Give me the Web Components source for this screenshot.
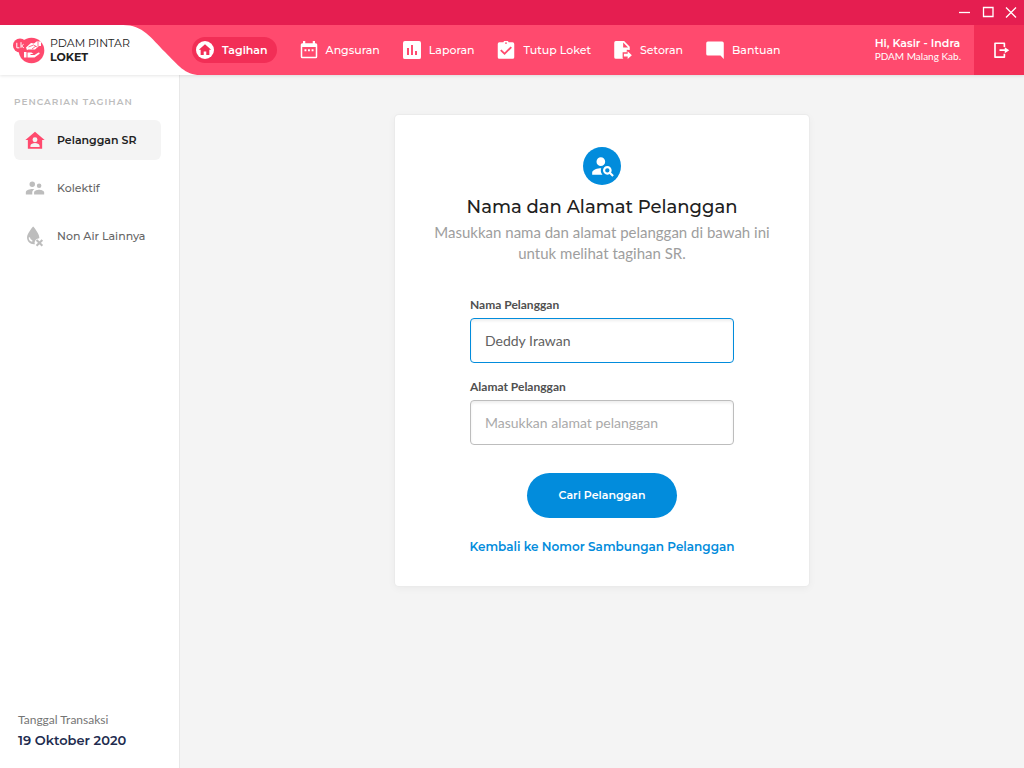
<!DOCTYPE html>
<html lang="id">
<head>
<meta charset="utf-8">
<meta name="viewport" content="width=device-width, initial-scale=1">
<title>PDAM Pintar Loket</title>
<style>
html, body { margin: 0; height: 100%; }
body {
  --display: Montserrat, Inter, sans-serif;
  --body: Lato, "Noto Sans", sans-serif;
  --pink: #ff4a6e;
  --rose: #f22e56;
  --blue: #028cdc;
  font-family: var(--display);
  background: #f4f4f4;
  color: #212121;
}
</style>
</head>
<body>
<app-shell>
  <title-bar slot="top"></title-bar>
  <top-bar slot="top">
    <brand-mark slot="brand"></brand-mark>
    <nav-item icon="home" active>Tagihan</nav-item>
    <nav-item icon="calendar">Angsuran</nav-item>
    <nav-item icon="chart">Laporan</nav-item>
    <nav-item icon="clipboard">Tutup Loket</nav-item>
    <nav-item icon="file">Setoran</nav-item>
    <nav-item icon="chat">Bantuan</nav-item>
    <user-info slot="user"><span slot="name">Hi, Kasir - Indra</span>PDAM Malang Kab.</user-info>
  </top-bar>
  <side-menu slot="side" heading="PENCARIAN TAGIHAN">
    <side-item icon="house" active>Pelanggan SR</side-item>
    <side-item icon="people">Kolektif</side-item>
    <side-item icon="drop">Non Air Lainnya</side-item>
    <span slot="date-label">Tanggal Transaksi</span>
    <span slot="date">19 Oktober 2020</span>
  </side-menu>
  <search-card>
    <span slot="title">Nama dan Alamat Pelanggan</span>
    <span slot="lead">Masukkan nama dan alamat pelanggan di bawah ini untuk melihat tagihan SR.</span>
    <text-field slot="fields" label="Nama Pelanggan" value="Deddy Irawan" active></text-field>
    <text-field slot="fields" label="Alamat Pelanggan" placeholder="Masukkan alamat pelanggan"></text-field>
  </search-card>
</app-shell>
<script>
const icons = {
  home: '<circle cx="12" cy="12" r="12" fill="#fff"/><path fill="#f22e56" d="M12 4.200 3.800 11.800h2.400v6.700h4.100v-4.600h3.400v4.600h4.100v-6.700h2.400z"/>',
  calendar: '<path fill="currentColor" fill-rule="evenodd" d="M4 0h3v3h10V0h3v3h1a2 2 0 0 1 2 2v16a2 2 0 0 1-2 2H3a2 2 0 0 1-2-2V5a2 2 0 0 1 2-2h1zM3 8v13h18V8zM6 11h2.500v2.500H6zm4.700 0h2.500v2.500h-2.500zm4.800 0H18v2.500h-2.500z"/>',
  chart: '<path fill="currentColor" fill-rule="evenodd" d="M2.500 0h19A2.500 2.500 0 0 1 24 2.500v19a2.500 2.500 0 0 1-2.500 2.500h-19A2.500 2.500 0 0 1 0 21.500v-19A2.500 2.500 0 0 1 2.500 0zM5.300 9.300v9.400H8V9.300zm5.400-4v13.400h2.600V5.300zm5.300 8v5.400h2.700v-5.400z"/>',
  clipboard: '<path fill="currentColor" fill-rule="evenodd" d="M3.200 1.800h5.300a3.700 3.700 0 0 1 7 0h5.300A2.200 2.200 0 0 1 23 4v17.500a2.200 2.200 0 0 1-2.200 2.200H3.200A2.200 2.200 0 0 1 1 21.500V4a2.200 2.200 0 0 1 2.200-2.200zM12 1.600a1.200 1.200 0 1 0 0 2.400 1.200 1.200 0 0 0 0-2.400zM18.200 7.200l-8.100 8.200-4.200-4.200-1.700 1.700 5.900 5.900 9.800-9.900z"/>',
  file: '<path fill="currentColor" fill-rule="evenodd" d="M2.500 0h11L21 7.500v4.500l-4-.2v3.300h-5.500v7.700l1 1H2.500A2.200 2.200 0 0 1 .3 21.600V2.200A2.200 2.200 0 0 1 2.500 0zM12.200 2.100v6.500h6.600z"/><path fill="currentColor" d="M13.200 17h5v-3.400l5.600 5.300-5.600 5.100v-3.400h-5z"/>',
  chat: '<path fill="currentColor" d="M2.500.7h19a2.200 2.200 0 0 1 2.200 2.200V24l-4.400-4.600H2.500a2.200 2.200 0 0 1-2.200-2.200V2.900A2.200 2.200 0 0 1 2.500.7z"/>',
  house: '<path fill="currentColor" fill-rule="evenodd" d="M12 3 1.500 12h2.700v9.500h15.600V12h2.700zm0 6a2.700 2.700 0 1 0 0 5.400A2.700 2.700 0 0 0 12 9zm-5 10.500h10v-1.300c0-1.900-3-2.900-5-2.900s-5 1-5 2.900z"/>',
  people: '<path fill="currentColor" d="M16.500 12a2.500 2.500 0 1 0 0-5 2.500 2.500 0 0 0 0 5zM9 11a3 3 0 1 0 0-6 3 3 0 0 0 0 6zm7.500 3c-1.830 0-5.500.920-5.500 2.750V19h11v-2.250C22 14.920 18.330 14 16.500 14zM9 13c-2.330 0-7 1.170-7 3.500V19h7v-2.250c0-.850.330-2.340 2.370-3.470C10.500 13.100 9.660 13 9 13z"/>',
  drop: '<path fill="currentColor" d="M10 1.500s6.700 7.300 6.700 12.100c0 .4 0 .5-.1.800-3 .1-5.200 2.600-5 5.600l.3.900c-5.100.6-8.600-3-8.600-7.300C3.300 8.800 10 1.500 10 1.500z"/><path fill="none" stroke="#fff" stroke-width="1.400" d="M5.800 13.500c.1 2.400 1.300 3.700 3.300 4.200"/><path stroke="currentColor" stroke-width="2.300" d="m13.700 16.300 6.300 6.300m0-6.300-6.300 6.300"/>',
  search: '<path fill="currentColor" d="M10 12a4 4 0 1 0 0-8 4 4 0 0 0 0 8zm.350 2.010C7.620 13.910 2 15.270 2 18v2h9.540c-2.470-2.760-1.230-5.890-1.190-5.990zM19.430 18.020c.360-.590.570-1.280.570-2.020 0-2.210-1.790-4-4-4s-4 1.790-4 4 1.790 4 4 4c.740 0 1.430-.220 2.020-.570L20.590 22 22 20.590l-2.570-2.570zM16 18a2 2 0 1 1 0-4 2 2 0 0 1 0 4z"/>',
  exit: '<path fill="none" stroke="currentColor" stroke-width="2.200" stroke-linejoin="round" d="M16.500 8V3H4v18.500h12.500v-4.500M10 12.200h8"/><path fill="currentColor" d="m17 8.200 6 4-6 4z"/>'
};
const svg = (name, size) => `<svg width="${size}" height="${size}" viewBox="0 0 24 24" aria-hidden="true">${icons[name]}</svg>`;

function define(tag, render) {
  customElements.define(tag, class extends HTMLElement {
    connectedCallback() {
      if (this.shadowRoot) return;
      const t = document.createElement('template');
      t.innerHTML = render(this);
      this.attachShadow({ mode: 'open' }).append(t.content.cloneNode(true));
    }
  });
}

define('app-shell', () => `
<style>
:host { display: grid; grid-template: auto 1fr / 180px 1fr; min-height: 100vh; }
header { grid-column: 1 / -1; z-index: 1; box-shadow: 0 1px 3px rgba(0,0,0,.1); }
aside { display: grid; background: #fff; border-right: 1px solid #e8e8e8; }
main { padding: 40px 24px; }
</style>
<header><slot name="top"></slot></header>
<aside><slot name="side"></slot></aside>
<main><slot></slot></main>`);

define('title-bar', () => `
<style>
:host { display: flex; justify-content: flex-end; align-items: flex-start; gap: 5px; box-sizing: border-box; height: 25px; padding: 3px 4px 0; background: #e51e50; color: #fff; }
button { display: grid; place-items: center; width: 18px; height: 18px; margin: 0; padding: 0; border: 0; background: none; color: inherit; }
path { fill: none; stroke: currentColor; stroke-width: 1.3; }
</style>
<button aria-label="Minimalkan"><svg width="14" height="14"><path d="M1 7.500h11"/></svg></button>
<button aria-label="Maksimalkan"><svg width="14" height="14"><path d="M2.500 2.500h9.500v9H2.500z"/></svg></button>
<button aria-label="Tutup"><svg width="14" height="14"><path d="m2 2.500 10 10m0-10-10 10"/></svg></button>`);

define('top-bar', () => `
<style>
:host { display: flex; align-items: stretch; height: 50px; background: var(--pink); color: #fff; }
nav { display: flex; align-items: center; gap: 23px; flex: 1; margin-left: -8px; }
.exit { display: grid; place-items: center; width: 50px; border: 0; padding: 0 0 0 4px; background: var(--rose); color: #fff; }
</style>
<slot name="brand"></slot>
<nav><slot></slot></nav>
<slot name="user"></slot>
<button class="exit" aria-label="Keluar">${svg('exit', 18)}</button>`);

define('brand-mark', () => `
<style>
:host { display: grid; width: 200px; height: 50px; color: #212121; }
.curve, a { grid-area: 1 / 1; }
a { display: flex; align-items: center; gap: 5px; padding-left: 13px; color: inherit; text-decoration: none; font-size: 11px; line-height: 14px; z-index: 1; }
span, b { display: block; }
</style>
<svg class="curve" width="200" height="50" aria-hidden="true"><path fill="#fff" d="M0 0h123c20 0 28 13 42 27 13 13 20 23 35 23H0z"/></svg>
<a href="#"><svg width="32" height="30" viewBox="0 0 32 30" aria-hidden="true">
<circle cx="18.500" cy="15.500" r="12.800" fill="#ff4a6e"/><circle cx="7" cy="10.500" r="7" fill="#ff4a6e"/>
<path fill="none" stroke="#fff" stroke-width="1" d="M3.800 7.800v5h2.600M8 7.200v5.600m2.600-3.500L8.500 11l2.300 1.800"/>
<path fill="#fff" d="m13 12.500 5-4.500 3 .5 2.500-2h4.500v4.500h-2l-4 3.500h-7l-1 .8z"/><path fill="none" stroke="#ff4a6e" stroke-width=".8" d="m15.500 12 5-2 3.500 2M19 14l4-3M25 7v4.500"/>
<path fill="#fff" d="M11 17h2.500v5.500H11zm3.500.5h4l2 1.500h-3v1h4l4-2.500c1.500 0 1.500 1 .5 1.700L21.500 22.500H14.500z"/>
</svg>
<div><span>PDAM PINTAR</span><b>LOKET</b></div></a>`);

define('nav-item', el => `
<style>
:host { display: block; }
a { display: flex; align-items: center; gap: 8px; height: 26px; color: #fff; text-decoration: none; font-size: 11px; line-height: 14px; font-weight: 500; white-space: nowrap; }
:host([active]) a { padding: 0 9px 0 4px; border-radius: 13px; background: var(--rose); font-weight: 600; }
svg { display: block; }
</style>
<a href="#">${svg(el.getAttribute('icon'), 18)}<slot></slot></a>`);

define('user-info', () => `
<style>
:host { display: flex; flex-direction: column; justify-content: center; padding: 0 13px 1px 0; font: 400 10px/13px var(--body); }
.name { font: 600 11px/14px var(--display); }
</style>
<span class="name"><slot name="name"></slot></span><span><slot></slot></span>`);

define('side-menu', el => `
<style>
:host { display: flex; flex-direction: column; padding: 20px 18px 18px 14px; }
h2 { margin: 0 0 12px; font-size: 9px; line-height: 13px; font-weight: 600; letter-spacing: 1px; color: #bdbdbd; white-space: nowrap; }
nav { display: grid; gap: 8px; }
footer { margin-top: auto; padding-left: 4px; }
.label { font: 400 12px/20px var(--body); color: #757575; }
.date { font-size: 13px; line-height: 20px; font-weight: 600; color: #212b4e; }
</style>
<h2>${el.getAttribute('heading')}</h2>
<nav><slot></slot></nav>
<footer><div class="label"><slot name="date-label"></slot></div><div class="date"><slot name="date"></slot></div></footer>`);

define('side-item', el => `
<style>
:host { display: block; }
a { display: flex; align-items: center; gap: 11px; height: 40px; padding-left: 10px; border-radius: 6px; color: #666; text-decoration: none; font-size: 11px; line-height: 14px; font-weight: 500; }
svg { color: #bdbdbd; width: 22px; height: 22px; }
:host([active]) a { background: #f4f4f4; color: #212121; font-weight: 600; }
:host([active]) svg { color: var(--pink); }
</style>
<a href="#">${svg(el.getAttribute('icon'), 22)}<slot></slot></a>`);

define('search-card', () => `
<style>
:host { display: block; box-sizing: border-box; max-width: 414px; margin: 0 auto; padding: 32px 36px 28px; border-radius: 4px; background: #fff; box-shadow: 0 0 0 1px #ebebeb, 0 2px 8px rgba(0,0,0,.05); text-align: center; }
.badge { display: grid; place-items: center; box-sizing: border-box; width: 38px; height: 38px; margin: 0 auto 8px; padding-left: 2px; border-radius: 50%; background: var(--blue); color: #fff; }
h1 { margin: 0; font-size: 18px; line-height: 28px; font-weight: 500; }
p { margin: 1px 0 31px; font: 400 15px/21px var(--body); color: #9e9e9e; }
form { display: grid; grid-template-columns: minmax(0, 1fr); gap: 14px; max-width: 264px; margin: 0 auto; }
button { justify-self: center; width: 150px; height: 45px; margin-top: 14px; padding: 0 0 2px; border: 0; border-radius: 23px; background: var(--blue); color: #fff; font: 600 11px/16px var(--display); }
a { justify-self: center; margin-top: 4px; color: var(--blue); font-size: 12px; line-height: 22px; font-weight: 600; text-decoration: none; white-space: nowrap; }
</style>
<div class="badge">${svg('search', 26)}</div>
<h1><slot name="title"></slot></h1>
<p><slot name="lead"></slot></p>
<form><slot name="fields"></slot><button type="button">Cari Pelanggan</button><a href="#">Kembali ke Nomor Sambungan Pelanggan</a></form>`);

define('text-field', el => `
<style>
:host { display: grid; text-align: left; }
label { margin-bottom: 3px; font: 700 12px/20px var(--body); color: #505050; }
input { box-sizing: border-box; width: 100%; height: 45px; padding: 0 14px; border: 1px solid #bdbdbd; border-radius: 4px; outline: 0; background: #fff; box-shadow: inset 0 2px 3px rgba(0,0,0,.07); font: 400 14px/20px var(--body); color: #616161; }
input::placeholder { color: #aaa; opacity: 1; }
:host([active]) input { border-color: var(--blue); }
</style>
<label for="field">${el.getAttribute('label')}</label>
<input id="field" type="text" value="${el.getAttribute('value') || ''}" placeholder="${el.getAttribute('placeholder') || ''}">`);
</script>
</body>
</html>
